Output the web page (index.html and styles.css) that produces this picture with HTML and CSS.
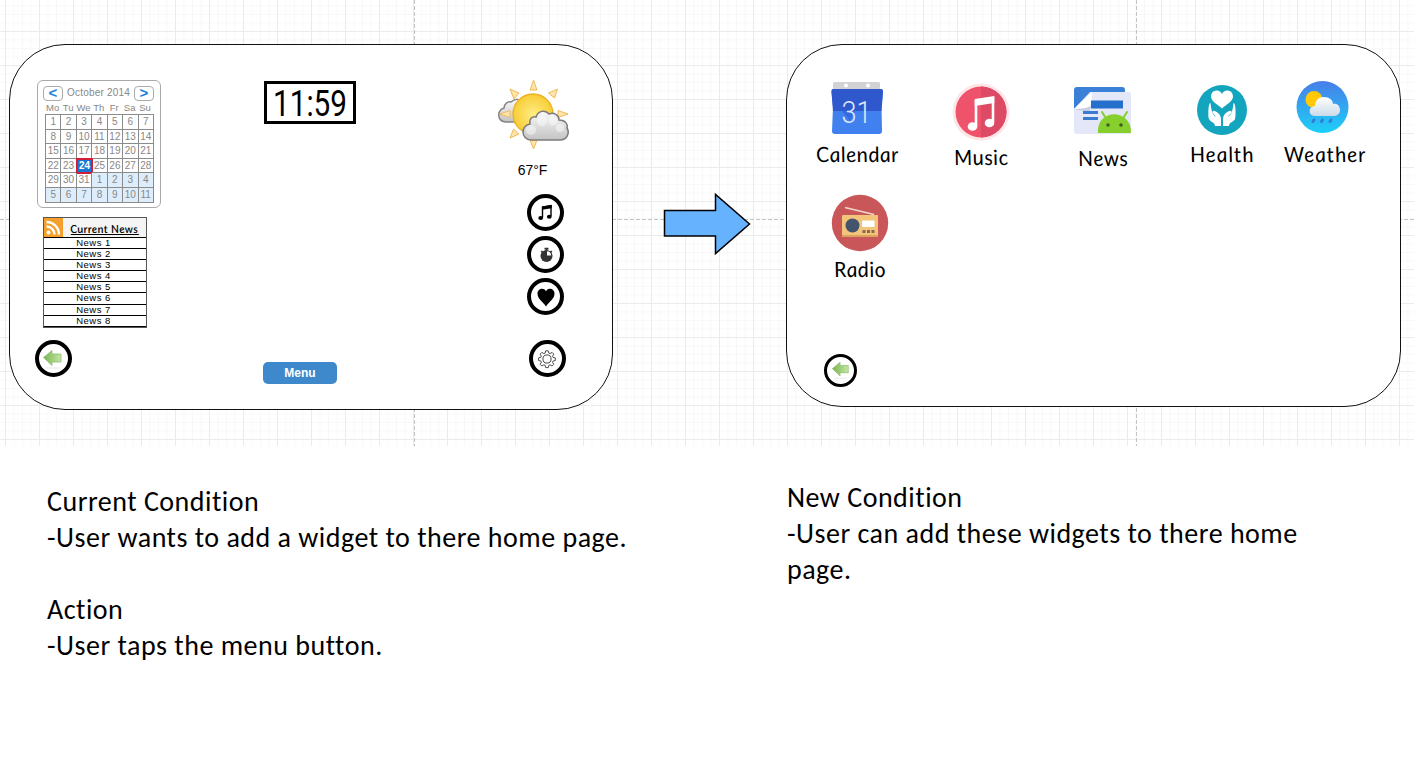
FILE: index.html
```html
<!DOCTYPE html>
<html lang="en">
<head>
<meta charset="utf-8">
<title>Widget menu storyboard</title>
<link rel="stylesheet" href="styles.css">
</head>
<body>
<main class="board">
  <section class="canvas">
    <div class="screen screen-home">
      <div class="col-left">
        <div class="calendar">
          <div class="cal-head"><span class="cal-nav">&lt;</span><span class="cal-title">October 2014</span><span class="cal-nav">&gt;</span></div>
          <div class="cal-days"><span>Mo</span><span>Tu</span><span>We</span><span>Th</span><span>Fr</span><span>Sa</span><span>Su</span></div>
          <div class="cal-grid">
            <span>1</span><span>2</span><span>3</span><span>4</span><span>5</span><span>6</span><span>7</span>
            <span>8</span><span>9</span><span>10</span><span>11</span><span>12</span><span>13</span><span>14</span>
            <span>15</span><span>16</span><span>17</span><span>18</span><span>19</span><span>20</span><span>21</span>
            <span>22</span><span>23</span><span class="today">24</span><span>25</span><span>26</span><span>27</span><span>28</span>
            <span>29</span><span>30</span><span>31</span><span class="next">1</span><span class="next">2</span><span class="next">3</span><span class="next">4</span>
            <span class="next">5</span><span class="next">6</span><span class="next">7</span><span class="next">8</span><span class="next">9</span><span class="next">10</span><span class="next">11</span>
          </div>
        </div>
        <div class="news">
          <div class="news-head">
            <svg width="19" height="19" viewBox="0 0 19 19"><rect width="19" height="19" fill="#f5a02c"/><circle cx="4.5" cy="14.5" r="2" fill="#fff"/><path d="M2.5 8.5a8 8 0 0 1 8 8M2.5 4a12.5 12.5 0 0 1 12.5 12.5" fill="none" stroke="#fff" stroke-width="2.3"/></svg>
            <span class="news-title">Current News</span>
          </div>
          <ul class="news-list"><li>News 1</li><li>News 2</li><li>News 3</li><li>News 4</li><li>News 5</li><li>News 6</li><li>News 7</li><li>News 8</li></ul>
        </div>
        <div class="round back-home">
          <svg width="22" height="22" viewBox="0 0 22 22"><defs><linearGradient id="leaf" x1="0" x2="1"><stop offset="0" stop-color="#79b550"/><stop offset="1" stop-color="#c5e6a6"/></linearGradient></defs><path d="M1.500 9.500 10 2.500V6h9v8h-9v3.500z" fill="url(#leaf)" stroke="#91bd74" stroke-width=".8"/><path d="M4 20h14" stroke="#e6e6e6"/></svg>
        </div>
      </div>
      <div class="col-mid">
        <div class="clock"><svg width="84" height="47" viewBox="0 0 84 47"><text x="5" y="37" textLength="74" lengthAdjust="spacingAndGlyphs" class="clock-text">11:59</text></svg></div>
        <div class="menu">Menu</div>
      </div>
      <div class="col-right">
        <svg class="weather" width="72" height="72" viewBox="0 0 72 72">
          <defs>
            <radialGradient id="sun"><stop offset="0" stop-color="#ffed83"/><stop offset="1" stop-color="#f7cd35"/></radialGradient>
            <linearGradient id="cloud" x2="0" y2="1"><stop offset="0" stop-color="#fafafa"/><stop offset="1" stop-color="#c3c3c3"/></linearGradient>
          </defs>
          <path d="M13 23c-3-1-7 2-7 6-4 1-6 5-5 9 1 4 4 5 8 5h17V24c-4-4-9-5-13-1z" fill="url(#cloud)" stroke="#858585" stroke-width="1.5"/>
          <g fill="#ffe6a6" stroke="#efb95d" stroke-width="1"><path d="m35.500 1 3.500 10h-7zM35.500 70l-3.500-9h7zM59.500 10l-3 9-6-5zM12 10l9 4-5 6zM70 35l-10 3.500v-7zM2 35l10-3.500v7zM12 59l3.500-9 5.500 5zM59 59l-3.500-9-5 5z"/></g>
          <circle cx="35" cy="35" r="20" fill="url(#sun)" stroke="#ecb01e" stroke-width="1.300"/>
          <path d="M32 45c-1-5 2-8 6-7 2-6 9-8 13-3 5-2 10 1 10 6 7 0 9 5 8 8 3 5 0 12-7 12H33c-5 0-8-4-8-8s3-7 7-8z" fill="url(#cloud)" stroke="#7b7b7b" stroke-width="1.500"/>
          <g fill="#fff" opacity=".45"><circle cx="44" cy="42" r="5"/><circle cx="55" cy="42" r="4.500"/><circle cx="33" cy="51" r="5"/><circle cx="62" cy="49" r="4"/></g>
        </svg>
        <div class="temp">67°F</div>
        <div class="round music-btn"><svg width="22" height="22" viewBox="0 0 22 22"><path d="M7.500 15.500V5l8.500-1.500V14" fill="none" stroke="#000" stroke-width="1.400"/><path d="M7 4.500 16.700 3v3.200L7 7.700z"/><ellipse cx="5.700" cy="16" rx="2.400" ry="2"/><ellipse cx="14.300" cy="14.700" rx="2.400" ry="2"/></svg></div>
        <div class="round timer-btn"><svg width="22" height="22" viewBox="0 0 22 22"><circle cx="11.500" cy="12" r="6" fill="#333"/><path d="M12 11.500V7.300a4.500 4.500 0 0 1 4.200 4.200z" fill="#fff"/><path d="M9.500 4.700h4M11.500 5v2M6.200 7l1.300 1.300M16.800 7l-1.300 1.300" stroke="#333" stroke-width="1.700"/></svg></div>
        <div class="round heart-btn"><svg width="22" height="22" viewBox="0 0 22 22"><path d="M11 20.500C8 15.500 2.500 13 2.500 7.500c0-5 6.500-6.500 8.500-2.200C13 1 19.500 2.500 19.500 7.500 19.500 13 14 15.500 11 20.500z"/></svg></div>
        <div class="round gear-btn"><svg width="20" height="20" viewBox="0 0 22 22" fill="none" stroke="#333" stroke-width="1"><circle cx="11" cy="11" r="4.500"/><path d="M9.500 1.800h3l.6 2.600 1.500.6 2.300-1.400 2 2-1.400 2.300.6 1.500 2.600.6v3l-2.600.6-.6 1.500 1.400 2.300-2 2-2.300-1.400-1.500.6-.6 2.600h-3l-.6-2.600-1.500-.6-2.300 1.400-2-2 1.400-2.300-.6-1.500-2.600-.6v-3l2.600-.6.600-1.500L3.100 5.600l2-2L7.400 5l1.500-.6z" transform="translate(.5 .3) scale(.95)"/></svg></div>
      </div>
    </div>

    <svg class="arrow" width="88" height="64" viewBox="0 0 88 64"><path d="M1.500 18.500h51V2.500L86.500 32 52.500 61.500V44h-51z" fill="#66b2ff" stroke="#000" stroke-width="1.500"/></svg>

    <div class="screen screen-menu">
      <div class="apps">
        <div class="app app-calendar">
          <svg width="60" height="60" viewBox="0 0 60 60">
            <path d="M6 5.500q0-1.500 1.500-1.500h44q1.500 0 1.500 1.500V14H6z" fill="#d2d2d5"/><circle cx="19" cy="7.500" r="2" fill="#fff"/><circle cx="41" cy="7.500" r="2" fill="#fff"/>
            <path d="M6 11h48q2 0 2 3l-1.500 15L55 53q0 3-3 3H8q-3 0-3-3l1-24L4.500 14q0-3 1.500-3z" fill="#4080ef"/>
            <path d="M6 11h48q2 0 2 3l-1.500 19H6L4.500 14q0-3 1.500-3z" fill="#3058cd"/><path d="m15 33 8 10 5-10z" fill="#356bdc"/>
            <text x="14.500" y="44.500" textLength="30" lengthAdjust="spacingAndGlyphs" class="app-date">31</text>
          </svg><span class="app-label">Calendar</span>
        </div>
        <div class="app app-music">
          <svg width="60" height="60" viewBox="0 0 60 60"><circle cx="30" cy="31" r="28.500" fill="#fde5e8"/><circle cx="30" cy="31" r="25.500" fill="#ef536b"/><path d="M30 5.500a25.500 25.500 0 0 1 0 51z" fill="#dc4a65"/><path d="M25 45V20l17-2.500V41" fill="none" stroke="#fff" stroke-width="2.600"/><path d="M23.700 18l19.600-3v7L23.700 25z" fill="#fff"/><ellipse cx="21.500" cy="45.500" rx="4.800" ry="4.300" fill="#fff"/><ellipse cx="38.500" cy="42" rx="4.800" ry="4.300" fill="#fff"/></svg>
          <span class="app-label">Music</span>
        </div>
        <div class="app app-news">
          <svg width="60" height="60" viewBox="0 0 60 60"><path d="M4 5h45q3 0 3 3v20H1V8q0-3 3-3z" fill="#3b80d7"/><path d="M17 10h39q2 0 2 2v37q0 3-3 3H4q-3 0-3-3V27z" fill="#e3e7f7"/><path d="M1 27 19 10q0 12-2 14-2 3-16 3z" fill="#fff"/><path d="M1 27q14 0 16-3 1 4-2 6z" fill="#c8cee2"/><path d="M18 18.500h32v8H18z" fill="#2470cc"/><path d="M10 29h15v3H10zM10 35h15v3H10z" fill="#397bd0"/><path d="M25 51C23 26 59 26 58 51z" fill="#86cf2d"/><path d="m29 30 5 8m20-8-5 8" stroke="#86cf2d" stroke-width="2" stroke-linecap="round"/><circle cx="35" cy="43" r="1.800" fill="#425b27"/><circle cx="48" cy="43" r="1.800" fill="#425b27"/></svg>
          <span class="app-label">News</span>
        </div>
        <div class="app app-health">
          <svg width="60" height="60" viewBox="0 0 60 60"><circle cx="30" cy="32" r="25" fill="#13a5bd"/><path d="M30 30.500c-4-4-11-7-11-12 0-7 9-8 11-2.500 2-5.500 11-4.500 11 2.500 0 5-7 8-11 12z" fill="#fff"/><path d="M29 48V41c0-5-6-9-8-8-2 1 2 4 3 6-4-2-5-9-5.500-14-2.500 0-2.500 14-1.500 16 1 3 6 3 6 7zM31 48V41c0-5 6-9 8-8 2 1-2 4-3 6 4-2 5-9 5.500-14 2.500 0 2.500 14 1.500 16-1 3-6 3-6 7z" fill="#fff"/></svg>
          <span class="app-label">Health</span>
        </div>
        <div class="app app-weather">
          <svg width="60" height="60" viewBox="0 0 60 60"><defs><linearGradient id="sky" x2="0" y2="1"><stop offset="0" stop-color="#477ee9"/><stop offset="1" stop-color="#1dd0f8"/></linearGradient><linearGradient id="haze" x2="0" y2="1"><stop offset="0" stop-color="#fff"/><stop offset="1" stop-color="#ccdbe8"/></linearGradient></defs><circle cx="27.500" cy="29" r="26" fill="url(#sky)"/><circle cx="19" cy="21.500" r="8.500" fill="#ffc809"/><path d="M20 38c-5 0-6-4-5-7 1-2 3-3 5-3 0-5 3-9 9-9 5 0 9 3 9 7 4-1 7 2 7 6 0 4-3 6-7 6z" fill="url(#haze)"/><path d="m19 42-1 1.500M27.500 42l-1 1.500m9.500-1.500-1 1.500" stroke="#317bd5" stroke-width="3" stroke-linecap="round"/></svg>
          <span class="app-label">Weather</span>
        </div>
      </div>
      <div class="app app-radio">
        <svg width="60" height="60" viewBox="0 0 60 60"><circle cx="30" cy="30" r="28.200" fill="#c95759"/><path d="m15 14.500 29 7" stroke="#f0d7cb" stroke-width="1.800"/><rect x="12" y="22" width="36" height="22" rx="1" fill="#f3c57c"/><path d="M12 42h36v2H12z" fill="#dba35e"/><circle cx="22.500" cy="32.500" r="7" fill="#44546c"/><rect x="32" y="27.500" width="12.500" height="6.500" rx="1" fill="#fff"/><path d="M32.500 37h3v3h-3zM37 37h3v3h-3zM41.500 37h3v3h-3z" fill="#8f6849"/></svg>
        <span class="app-label">Radio</span>
      </div>
      <div class="round back-menu">
        <svg width="20" height="20" viewBox="0 0 22 22"><path d="M1.500 9.500 10 2.500V6h9v8h-9v3.500z" fill="url(#leaf)" stroke="#91bd74" stroke-width=".8"/><path d="M4 20h14" stroke="#e6e6e6"/></svg>
      </div>
    </div>
  </section>

  <section class="notes">
    <div class="note note-current">
      <p>Current Condition</p>
      <p>-User wants to add a widget to there home page.</p>
      <p class="gap-line">Action</p>
      <p>-User taps the menu button.</p>
    </div>
    <div class="note note-new">
      <p>New Condition</p>
      <p>-User can add these widgets to there home<br>page.</p>
    </div>
  </section>
</main>
</body>
</html>
```
FILE: styles.css
```css
* { box-sizing: border-box; }
body { margin: 0; background: #fff; color: #000; font-family: "Liberation Sans", Arial, sans-serif; overflow: hidden; }
p, ul { margin: 0; padding: 0; }
svg { display: block; flex: none; }
.board { width: 1422px; height: 762px; }

.canvas {
  width: 1414px;
  height: 446px;
  padding: 44px 0 0 9px;
  display: flex;
  align-items: flex-start;
  background-image:
    repeating-linear-gradient(180deg, #c4c4c4 0 4px, transparent 4px 6px),
    repeating-linear-gradient(180deg, #c4c4c4 0 4px, transparent 4px 6px),
    repeating-linear-gradient(90deg, #c4c4c4 0 4px, transparent 4px 6px),
    linear-gradient(90deg, #ebebeb 1px, transparent 1px),
    linear-gradient(180deg, #ebebeb 1px, transparent 1px),
    linear-gradient(90deg, #f8f8f8 1px, transparent 1px),
    linear-gradient(180deg, #f8f8f8 1px, transparent 1px);
  background-size: 1px 100%, 1px 100%, 100% 1px, 34px 34px, 34px 34px, 8.5px 8.5px, 8.5px 8.5px;
  background-position: 414px 0, 1136px 0, 0 219px, 5px 0, 0 31px, 5px 0, 0 5.5px;
  background-repeat: no-repeat, no-repeat, no-repeat, repeat, repeat, repeat, repeat;
}
.screen { background: #fff; border: 1px solid #111; border-radius: 56px; flex: none; }
.screen-home { width: 604px; height: 366px; display: flex; align-items: flex-start; }
.screen-menu { width: 615px; height: 363px; margin-left: 35px; padding: 33px 0 0 25px; }
.arrow { margin: 148px 0 0 50px; }

.col-left { width: 124px; margin: 35px 0 0 27px; }
.col-mid { width: 92px; margin: 36px 0 0 103px; }
.col-right { width: 72px; margin: 34px 0 0 142px; }

.calendar { height: 128px; border: 1px solid #a9a9a9; border-radius: 6px; padding: 5px 6px 0 7px; color: #888; background: #fff; }
.cal-head { display: flex; justify-content: space-between; margin: 0 0 0 -2px; height: 15px; }
.cal-nav { width: 20px; height: 15px; border: 1px solid #aaa; border-radius: 4px; color: #1b7fe0; font-size: 15px; font-weight: bold; line-height: 12px; text-align: center; }
.cal-title { font-size: 10px; line-height: 14px; letter-spacing: .2px; white-space: nowrap; }
.cal-days { display: grid; grid-template-columns: repeat(7, 15.4px); height: 13px; font-size: 9.5px; line-height: 13px; text-align: center; }
.cal-grid { display: grid; grid-template-columns: repeat(7, 15.43px); grid-template-rows: repeat(6, 14.6px); width: 109px; border: solid #8b8b8b; border-width: 1px 0 0 1px; font-size: 10px; }
.cal-grid span { border: solid #8b8b8b; border-width: 0 1px 1px 0; line-height: 14px; text-align: center; }
.cal-grid .next { background: #deedfb; }
.cal-grid .today { background: #1877d2; color: #fff; font-weight: bold; border: 0; outline: 2px solid #d51e35; outline-offset: -1px; }

.news { width: 104px; height: 111px; margin: 9px 0 0 6px; border: 1px solid #555; background: #f4f4f4; }
.news-head { height: 19px; display: flex; align-items: center; }
.news-title { font-family: "Comic Sans MS", Lato, sans-serif; font-style: italic; font-weight: 600; font-size: 11px; text-decoration: underline; white-space: nowrap; margin: 1px 0 0 7px; letter-spacing: .4px; transform: skewX(8deg); }
.news-list { list-style: none; border-top: 1px solid #000; }
.news-list li { height: 11.1px; line-height: 10.5px; font-size: 9.5px; letter-spacing: .5px; text-align: center; padding-right: 3px; border-bottom: 1px solid #000; background: #fff; }

.round { width: 37px; height: 37px; border: 4px solid #000; border-radius: 50%; background: #fff; display: flex; align-items: center; justify-content: center; }
.back-home { margin: 12px 0 0 -2.5px; }
.back-menu { width: 33px; height: 33px; border-width: 3px; margin: 70.5px 0 0 12px; }

.clock { width: 92px; height: 43px; border: 3px solid #000; padding-left: 1px; }
.clock svg { margin-top: -5px; }
.clock-text { font-family: Roboto, sans-serif; font-size: 36px; }
.menu { width: 74px; height: 22px; margin: 238px 0 0 -1px; border-radius: 5px; background: #3e89cb; color: #fff; font-size: 12px; font-weight: bold; line-height: 22px; text-align: center; }

.temp { margin: 9px 0 0 -3px; height: 20px; line-height: 20px; font-size: 14px; text-align: center; }
.music-btn { margin: 14px 0 0 29px; }
.timer-btn { margin: 5px 0 0 29px; }
.heart-btn { margin: 5px 0 0 29px; }
.gear-btn { margin: 25px 0 0 30.5px; }

.apps { display: flex; align-items: flex-start; height: 114px; }
.app { width: 90px; flex: none; display: flex; flex-direction: column; align-items: center; }
.app-label { font-family: "Comic Sans MS", Lato, sans-serif; font-style: italic; font-size: 21px; line-height: 28px; margin-top: 2px; letter-spacing: .5px; transform: skewX(8deg); white-space: nowrap; }
.app-date { font-family: Roboto, sans-serif; font-size: 31px; font-weight: 300; fill: #dfe8fb; }
.app-music { margin: 3px 0 0 34px; }
.app-news { margin: 4px 0 0 32px; }
.app-health { margin-left: 29px; }
.app-weather { margin-left: 13px; }
.app-weather .app-label, .app-health .app-label { letter-spacing: .9px; }
.app-radio { margin: 1px 0 0 3px; }

.notes { display: grid; grid-template-columns: 740px 600px; padding: 38px 0 0 47px; }
.note { font-family: Calibri, Carlito, "Open Sans", sans-serif; font-size: 28px; line-height: 36px; white-space: nowrap; letter-spacing: .5px; }
.note-new { margin-top: -4px; }
.gap-line { margin-top: 36px; }
```
